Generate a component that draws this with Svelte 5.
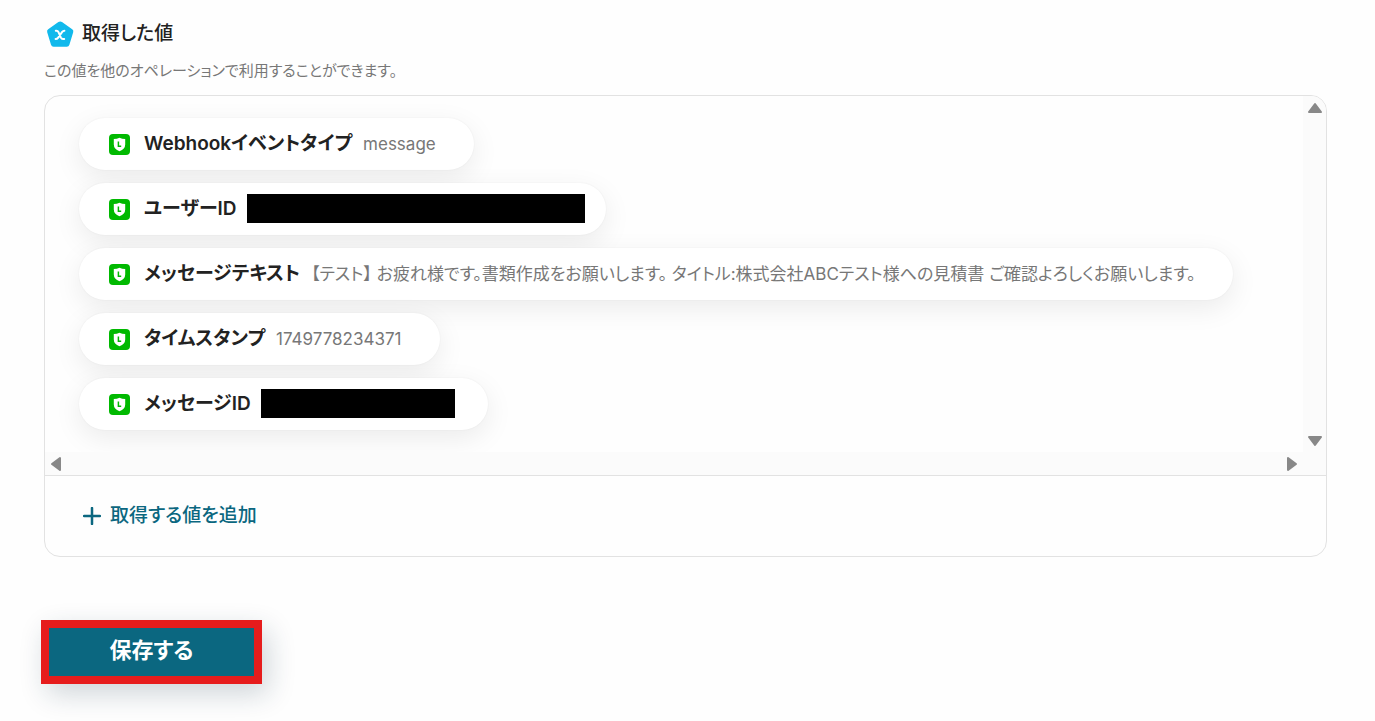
<script lang="ts">
	interface Output {
		label: string;
		value?: string;
		maskWidth?: number;
		maskEnd?: number;
	}

	const outputs: Output[] = [
		{ label: 'Webhookイベントタイプ', value: 'message' },
		{ label: 'ユーザーID', maskWidth: 338, maskEnd: 21 },
		{
			label: 'メッセージテキスト',
			value: '【テスト】 お疲れ様です。書類作成をお願いします。 タイトル:株式会社ABCテスト様への見積書 ご確認よろしくお願いします。'
		},
		{ label: 'タイムスタンプ', value: '1749778234371' },
		{ label: 'メッセージID', maskWidth: 194, maskEnd: 33 }
	];
</script>

<main>
	<header>
		<svg class="badge" viewBox="0 0 28 28" aria-hidden="true">
			<path d="M12.4 2q1.8-1.2 3.6 0l10.2 7.2q1.6 1.2 1 3.1l-3.8 12.5q-.6 2-2.6 2H7.6q-2 0-2.6-2L1.2 12.3q-.6-1.9 1-3.1z" fill="#11b9ec" />
			<path d="M9.8 10.8h.6q1.5 0 2.1 1.3l2.4 5.6q.6 1.3 2.1 1.3h1.2M18.400 10.800q-1.400 0-2.200 1.100l-4.200 6q-.8 1.100-2.400 1.100" fill="none" stroke="#fff" stroke-width="2" stroke-linecap="round" />
		</svg>
		<h2>取得した値</h2>
	</header>
	<p class="lead">この値を他のオペレーションで利用することができます。</p>

	<section class="panel">
		<div class="scroller">
			<ul>
				{#each outputs as output}
					<li style:padding-right={output.maskEnd ? `${output.maskEnd}px` : null}>
						<svg class="app" viewBox="0 0 21 21" aria-hidden="true">
							<rect width="21" height="21" rx="4" fill="#00b900" />
							<path d="M10.5 3.8Q13 5.1 16.2 5.1V10.5Q16.2 15 10.5 17.3Q4.800 15 4.800 10.500V5.100Q8 5.100 10.500 3.800z" fill="#fff" />
							<path d="M9.400 7.400V12.200H12.200" fill="none" stroke="#00b900" stroke-width="1.500" />
						</svg>
						<span class="label">{output.label}</span>
						{#if output.maskWidth}
							<span class="mask" style:width="{output.maskWidth}px"></span>
						{:else}
							<span class="value">{output.value}</span>
						{/if}
					</li>
				{/each}
			</ul>
			<div class="bar vertical">
				<button aria-label="上へスクロール">
					<svg viewBox="0 0 16 12"><path d="M8 2 14 10H2z" /></svg>
				</button>
				<button aria-label="下へスクロール">
					<svg viewBox="0 0 16 12"><path d="M8 10 2 2H14z" /></svg>
				</button>
			</div>
			<div class="bar horizontal">
				<button aria-label="左へスクロール">
					<svg viewBox="0 0 12 16"><path d="M2 8 10 2V14z" /></svg>
				</button>
				<button aria-label="右へスクロール">
					<svg viewBox="0 0 12 16"><path d="M10 8 2 14V2z" /></svg>
				</button>
			</div>
			<div class="bar"></div>
		</div>
		<div class="footer">
			<button class="add">
				<svg viewBox="0 0 18 18" aria-hidden="true">
					<path d="M9 1V17M1 9H17" fill="none" stroke="#0b6780" stroke-width="2.5" stroke-linecap="round" />
				</svg>
				取得する値を追加
			</button>
		</div>
	</section>

	<button class="save">保存する</button>
</main>

<style>
:global(body) {
	background: #fefefe;
}

main {
	padding: 18px 48px 36px 44px;
	font-family: Inter, "Noto Sans CJK JP", sans-serif;
	font-feature-settings: "palt";
	color: #222;
}

button {
	font: inherit;
	font-feature-settings: inherit;
	border: none;
	background: none;
	padding: 0;
	cursor: pointer;
}

header {
	display: flex;
	align-items: center;
	gap: 8px;
	padding-left: 2px;
	height: 32px;
}

.badge {
	width: 28px;
	height: 28px;
}

h2 {
	margin: 0;
	font-size: 19px;
	font-weight: 500;
	line-height: 28px;
}

.lead {
	margin: 8px 0 12px;
	font-size: 15px;
	line-height: 25px;
	color: #777;
}

.panel {
	border: 1px solid #e2e2e2;
	border-radius: 16px;
	overflow: hidden;
}

.scroller {
	display: grid;
	grid-template-columns: 1fr 23px;
	grid-template-rows: auto 23px;
	border-bottom: 1px solid #e2e2e2;
}

ul {
	display: flex;
	flex-direction: column;
	align-items: flex-start;
	gap: 13px;
	min-width: 0;
	margin: 0;
	padding: 22px 34px;
	list-style: none;
	overflow: hidden;
}

li {
	display: flex;
	align-items: center;
	height: 52px;
	padding: 0 38px 0 30px;
	border-radius: 26px;
	background: #fff;
	box-shadow: 0 8px 28px rgba(0, 0, 0, .08), 0 0 2px rgba(0, 0, 0, .06);
	white-space: nowrap;
}

.app {
	width: 21px;
	height: 21px;
	margin-right: 14px;
}

.label,
.value {
	line-height: 24px;
}

.label {
	font-size: 19px;
	font-weight: 600;
}

.value {
	margin-left: 11px;
	font-size: 17px;
	color: #777;
}

.mask {
	height: 29px;
	margin: 0 0 2px 10px;
	background: #000;
}

.bar {
	display: flex;
	justify-content: space-between;
	align-items: center;
	background: #fbfbfb;
}

.vertical {
	flex-direction: column;
	padding: 6px 0 5px;
}

.horizontal {
	padding: 0 5px;
}

.bar button {
	display: flex;
}

.bar svg {
	width: 16px;
	height: 12px;
	fill: #888;
	stroke: #888;
	stroke-width: 2;
	stroke-linejoin: round;
}

.horizontal svg {
	width: 12px;
	height: 16px;
}

.footer {
	padding: 24px 38px 25px;
}

.add {
	display: flex;
	align-items: center;
	gap: 9px;
	font-size: 19px;
	font-weight: 500;
	line-height: 31px;
	color: #0b6780;
}

.add svg {
	width: 18px;
	height: 18px;
}

.save {
	width: 221px;
	height: 64px;
	margin: 63px 0 0 -3px;
	padding-bottom: 8px;
	border: 8px solid #e61c1c;
	background: #0b6780;
	box-shadow: 6px 10px 28px rgba(20, 50, 70, .2);
	color: #fff;
	font-size: 22px;
	font-weight: 700;
}
</style>
